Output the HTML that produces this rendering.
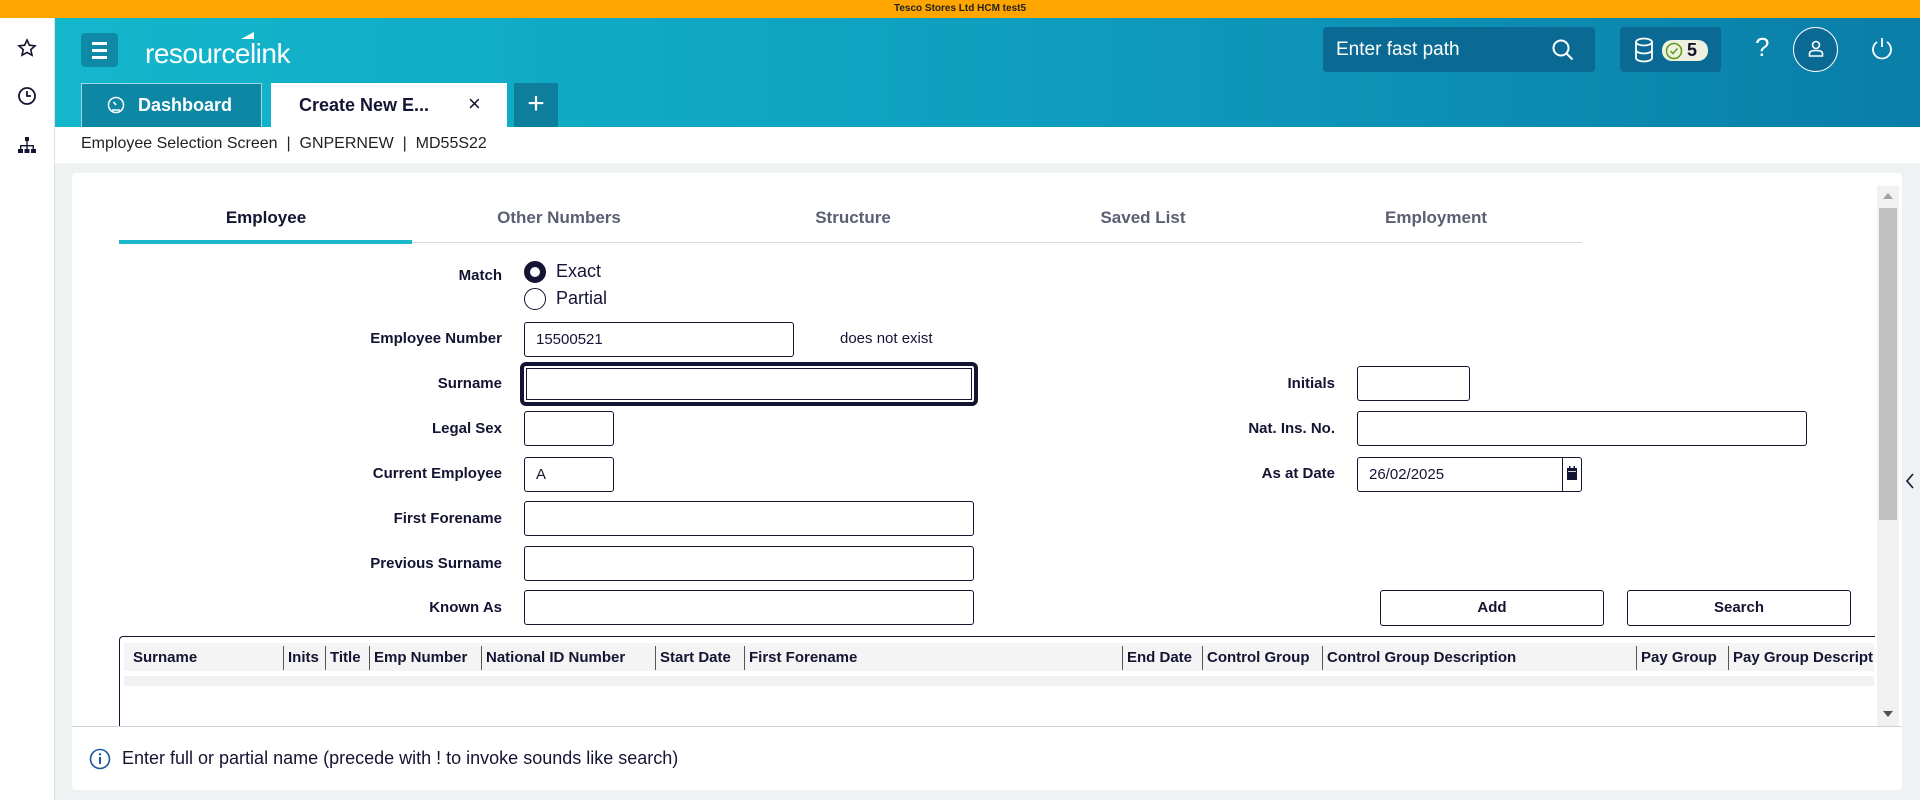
<!DOCTYPE html>
<html><head><meta charset="utf-8"><style>
*{box-sizing:border-box;margin:0;padding:0}
body{width:1920px;height:800px;overflow:hidden;position:relative;background:#eef2f3;font-family:"Liberation Sans",sans-serif;color:#141433}
.a{position:absolute}
.top{left:0;top:0;width:1920px;height:18px;background:#ffa500;font-size:10px;font-weight:bold;text-align:center;line-height:18px;color:#222}
.side{left:0;top:18px;width:55px;height:782px;background:#fff;border-right:1px solid #e0e0e0}
.hdr{left:55px;top:18px;width:1865px;height:109px;background:linear-gradient(90deg,#13b7cc 0%,#0f9fc0 50%,#0a7ea8 100%)}
.crumb{left:55px;top:127px;width:1865px;height:36px;background:#fff;font-size:16px;padding:8px 0 0 26px;color:#222}
.panel{left:72px;top:173px;width:1830px;height:617px;background:#fff;border-radius:4px}
.lbl{font-size:15px;font-weight:bold;text-align:right;width:300px;left:202px}
.rl{font-size:15px;font-weight:bold;text-align:right;width:300px;left:1035px}
.in{border:1px solid #141433;border-radius:3px;height:35px;background:#fff;font-size:15px;padding:8px 11px}
.btn{border:1px solid #141433;border-radius:3px;height:36px;font-size:15px;font-weight:bold;text-align:center;line-height:34px;background:#fff}
.tab{top:208px;width:294px;text-align:center;font-size:17px;font-weight:bold;color:#5a5f73}
.th{top:646px;font-size:15px;font-weight:bold;height:24px;line-height:24px;padding-left:4px;border-left:1px solid #555}
</style></head><body>
<div class="a top">Tesco Stores Ltd HCM test5</div>
<div class="a side">
<svg class="a" style="left:17px;top:20px" width="20" height="20" viewBox="0 0 20 20"><path d="M10 2l2.4 5.2 5.6.6-4.2 3.8 1.2 5.6L10 14.4 5 17.2l1.2-5.6L2 7.8l5.6-.6z" fill="none" stroke="#141433" stroke-width="1.6"/></svg>
<svg class="a" style="left:17px;top:68px" width="20" height="20" viewBox="0 0 20 20"><circle cx="10" cy="10" r="8" fill="none" stroke="#141433" stroke-width="1.8"/><path d="M10 5v5h4" fill="none" stroke="#141433" stroke-width="1.8"/></svg>
<svg class="a" style="left:17px;top:118px" width="20" height="20" viewBox="0 0 20 20" fill="#141433"><rect x="8" y="1" width="4" height="4"/><rect x="9.3" y="5" width="1.4" height="4"/><rect x="3" y="9" width="14" height="1.4"/><rect x="3" y="9" width="1.4" height="4"/><rect x="15.6" y="9" width="1.4" height="4"/><rect x="9.3" y="9" width="1.4" height="4"/><rect x="1" y="13" width="5" height="4"/><rect x="7.5" y="13" width="5" height="4"/><rect x="14" y="13" width="5" height="4"/></svg>
</div>
<div class="a hdr">
 <div class="a" style="left:26px;top:15px;width:37px;height:34px;background:#0f8aa6;border-radius:4px">
  <div class="a" style="left:11px;top:9px;width:15px;height:2.5px;background:#fff"></div>
  <div class="a" style="left:11px;top:16px;width:15px;height:2.5px;background:#fff"></div>
  <div class="a" style="left:11px;top:23px;width:15px;height:2.5px;background:#fff"></div>
 </div>
 <div class="a" style="left:90px;top:20px;font-size:28px;color:#fff;letter-spacing:-0.5px">resource<span style="font-weight:300">link</span></div>
 <div class="a" style="left:186px;top:14px;width:0;height:0;border-left:13px solid transparent;border-bottom:7px solid #fff"></div>
 <div class="a" style="left:26px;top:65px;width:181px;height:44px;background:#0d87a4;border:1px solid #9fd8e4;border-bottom:none;color:#fff;font-size:18px;font-weight:bold;line-height:42px;padding-left:56px">Dashboard</div>
 <svg class="a" style="left:52px;top:78px" width="18" height="18" viewBox="0 0 18 18"><circle cx="9" cy="9" r="7.5" fill="none" stroke="#fff" stroke-width="1.5"/><path d="M9 9l-2.5-3" stroke="#fff" stroke-width="1.6"/><path d="M5 14h8" stroke="#fff" stroke-width="1.5"/></svg>
 <div class="a" style="left:216px;top:65px;width:236px;height:44px;background:#fff;font-size:18px;font-weight:bold;line-height:44px;padding-left:28px">Create New E...</div>
 <div class="a" style="left:413px;top:73px;font-size:22px;color:#141433">×</div>
 <div class="a" style="left:459px;top:65px;width:44px;height:44px;background:#0d7e9c;color:#fff;font-size:30px;text-align:center;line-height:42px;font-weight:300">+</div>
 <div class="a" style="left:1268px;top:9px;width:272px;height:45px;background:#0a6a93;border-radius:4px;color:#fff;font-size:19px;line-height:45px;padding-left:13px">Enter fast path</div>
 <svg class="a" style="left:1496px;top:20px" width="24" height="24" viewBox="0 0 24 24"><circle cx="10" cy="10" r="7.5" fill="none" stroke="#fff" stroke-width="2"/><path d="M15.5 15.5l6 6" stroke="#fff" stroke-width="2"/></svg>
 <div class="a" style="left:1565px;top:9px;width:101px;height:45px;background:#0a6a93;border-radius:4px"></div>
 <svg class="a" style="left:1579px;top:19px" width="20" height="26" viewBox="0 0 20 26"><ellipse cx="10" cy="5" rx="8" ry="3.5" fill="none" stroke="#fff" stroke-width="1.8"/><path d="M2 5v16c0 2 4 3.5 8 3.5s8-1.5 8-3.5V5M2 13c0 2 4 3.5 8 3.5s8-1.5 8-3.5" fill="none" stroke="#fff" stroke-width="1.8"/></svg>
 <div class="a" style="left:1607px;top:22px;width:46px;height:21px;background:#eef0e0;border-radius:10px;font-weight:bold;font-size:18px;line-height:21px;padding-left:25px;color:#141433">5</div>
 <svg class="a" style="left:1610px;top:24px" width="18" height="18" viewBox="0 0 18 18"><circle cx="9" cy="9" r="7.5" fill="none" stroke="#5a9a1a" stroke-width="1.5"/><path d="M5.5 9l2.5 2.5 4.5-5" fill="none" stroke="#5a9a1a" stroke-width="1.5"/></svg>
 <div class="a" style="left:1700px;top:14px;color:#fff;font-size:26px">?</div>
 <div class="a" style="left:1738px;top:9px;width:45px;height:45px;border:1.5px solid #fff;border-radius:50%;background:#0a6a93"></div>
 <svg class="a" style="left:1751px;top:21px" width="20" height="20" viewBox="0 0 20 20"><circle cx="10" cy="6" r="3.5" fill="none" stroke="#fff" stroke-width="1.6"/><path d="M3.5 17v-2.5c0-2 2-3 6.5-3s6.5 1 6.5 3V17z" fill="none" stroke="#fff" stroke-width="1.6"/></svg>
 <svg class="a" style="left:1815px;top:18px" width="24" height="26" viewBox="0 0 24 26"><path d="M7 6a9 9 0 1 0 10 0" fill="none" stroke="#fff" stroke-width="1.8"/><path d="M12 2v9" stroke="#fff" stroke-width="1.8"/></svg>
</div>
<div class="a crumb">Employee Selection Screen &nbsp;| &nbsp;GNPERNEW &nbsp;| &nbsp;MD55S22</div>
<div class="a panel"></div>
<div class="a" style="left:1877px;top:186px;width:22px;height:540px;background:#f1f1f1"></div>
<div class="a" style="left:1879px;top:208px;width:18px;height:312px;background:#c1c1c1"></div>
<div class="a" style="left:1883px;top:193px;border-left:5px solid transparent;border-right:5px solid transparent;border-bottom:6px solid #a3a3a3;width:0"></div>
<div class="a" style="left:1883px;top:711px;border-left:5px solid transparent;border-right:5px solid transparent;border-top:6px solid #505050;width:0"></div>
<svg class="a" style="left:1904px;top:472px" width="12" height="18" viewBox="0 0 12 18"><path d="M9 2L3 9l6 7" fill="none" stroke="#141433" stroke-width="1.6"/></svg>

<div class="a" style="left:119px;top:242px;width:1463px;height:1px;background:#d5d8dc"></div>
<div class="a" style="left:119px;top:240px;width:293px;height:4px;background:#1bb8cc"></div>
<div class="a tab" style="left:119px;color:#141433">Employee</div>
<div class="a tab" style="left:412px">Other Numbers</div>
<div class="a tab" style="left:706px">Structure</div>
<div class="a tab" style="left:996px">Saved List</div>
<div class="a tab" style="left:1289px">Employment</div>

<div class="a lbl" style="top:267px">Match</div>
<div class="a" style="left:524px;top:261px;width:22px;height:22px;border-radius:50%;border:6px solid #141433"></div>
<div class="a" style="left:556px;top:261px;font-size:18px">Exact</div>
<div class="a" style="left:524px;top:288px;width:22px;height:22px;border-radius:50%;border:1.5px solid #141433"></div>
<div class="a" style="left:556px;top:288px;font-size:18px">Partial</div>

<div class="a lbl" style="top:330px">Employee Number</div>
<div class="a in" style="left:524px;top:322px;width:270px">15500521</div>
<div class="a" style="left:840px;top:330px;font-size:15px">does not exist</div>
<div class="a lbl" style="top:375px">Surname</div>
<div class="a in" style="left:520px;top:362px;width:458px;height:44px;border:4px solid #141433;border-radius:6px;box-shadow:inset 0 0 0 2px #fff,inset 0 0 0 3px #141433"></div>
<div class="a lbl" style="top:420px">Legal Sex</div>
<div class="a in" style="left:524px;top:411px;width:90px"></div>
<div class="a lbl" style="top:465px">Current Employee</div>
<div class="a in" style="left:524px;top:457px;width:90px">A</div>
<div class="a lbl" style="top:510px">First Forename</div>
<div class="a in" style="left:524px;top:501px;width:450px"></div>
<div class="a lbl" style="top:555px">Previous Surname</div>
<div class="a in" style="left:524px;top:546px;width:450px"></div>
<div class="a lbl" style="top:599px">Known As</div>
<div class="a in" style="left:524px;top:590px;width:450px"></div>

<div class="a rl" style="top:375px">Initials</div>
<div class="a in" style="left:1357px;top:366px;width:113px"></div>
<div class="a rl" style="top:420px">Nat. Ins. No.</div>
<div class="a in" style="left:1357px;top:411px;width:450px"></div>
<div class="a rl" style="top:465px">As at Date</div>
<div class="a in" style="left:1357px;top:457px;width:225px">26/02/2025</div>
<div class="a" style="left:1562px;top:457px;width:1px;height:35px;background:#141433"></div>
<svg class="a" style="left:1566px;top:465px" width="12" height="16" viewBox="0 0 12 16"><rect x="1" y="3" width="10" height="12" fill="#141433"/><rect x="3" y="1" width="1.5" height="3" fill="#141433"/><rect x="7.5" y="1" width="1.5" height="3" fill="#141433"/><rect x="2" y="6" width="8" height="0.8" fill="#fff"/></svg>
<div class="a btn" style="left:1380px;top:590px;width:224px">Add</div>
<div class="a btn" style="left:1627px;top:590px;width:224px">Search</div>

<div class="a" style="left:119px;top:636px;width:1756px;height:90px;border:1px solid #141433;border-bottom:none;border-right:none;border-radius:4px 0 0 0"></div>
<div class="a" style="left:124px;top:643px;width:1750px;height:28px;background:#f4f4f4"></div>
<div class="a" style="left:124px;top:676px;width:1750px;height:10px;background:#f1f1f1"></div>
<div class="a th" style="left:129px;border-left:none">Surname</div>
<div class="a th" style="left:283px">Inits</div>
<div class="a th" style="left:325px">Title</div>
<div class="a th" style="left:369px">Emp Number</div>
<div class="a th" style="left:481px">National ID Number</div>
<div class="a th" style="left:655px">Start Date</div>
<div class="a th" style="left:744px">First Forename</div>
<div class="a th" style="left:1122px">End Date</div>
<div class="a th" style="left:1202px">Control Group</div>
<div class="a th" style="left:1322px">Control Group Description</div>
<div class="a th" style="left:1636px">Pay Group</div>
<div class="a th" style="left:1728px;width:146px;overflow:hidden;white-space:nowrap">Pay Group Description</div>

<div class="a" style="left:72px;top:726px;width:1830px;height:1px;background:#d0d3d6"></div>
<svg class="a" style="left:89px;top:748px" width="22" height="22" viewBox="0 0 22 22"><circle cx="11" cy="11" r="9.5" fill="none" stroke="#1a5a9a" stroke-width="1.6"/><rect x="10" y="9" width="2" height="7" fill="#1a5a9a"/><circle cx="11" cy="6.3" r="1.2" fill="#1a5a9a"/></svg>
<div class="a" style="left:122px;top:748px;font-size:18px;color:#141433">Enter full or partial name (precede with ! to invoke sounds like search)</div>
</body></html>
